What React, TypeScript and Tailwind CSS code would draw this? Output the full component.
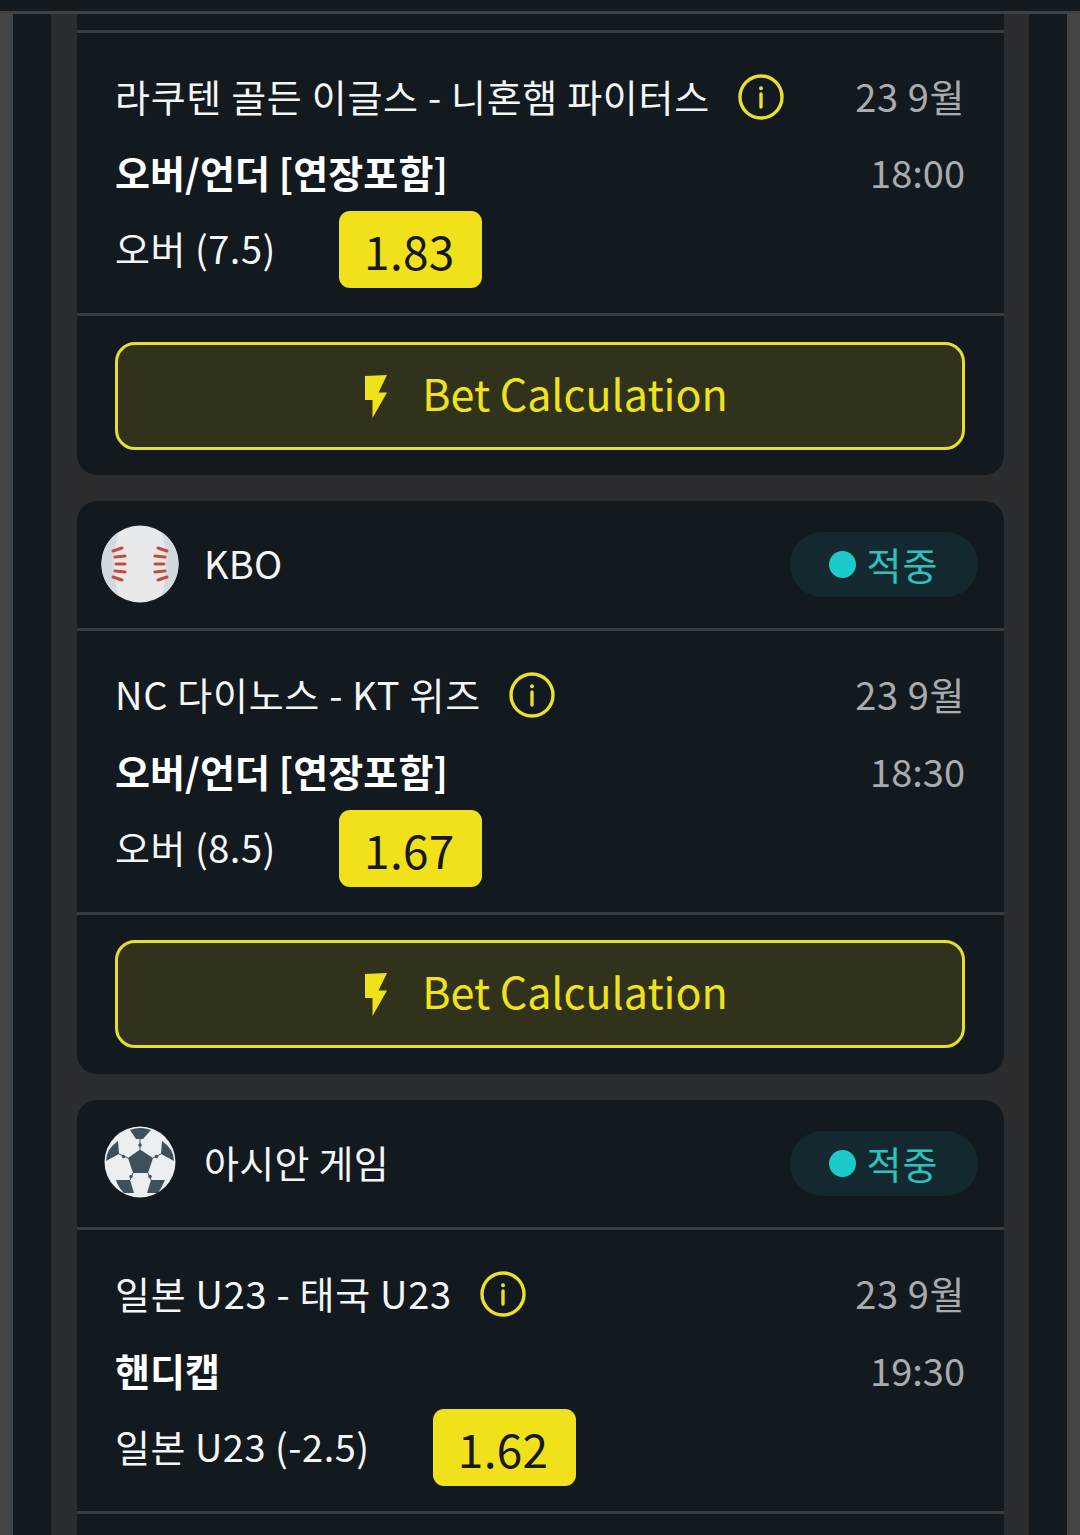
const font = { fontFamily: '"Noto Sans CJK KR", "Noto Sans", sans-serif' };

function Info() {
  return (
    <svg width="46" height="46" viewBox="0 0 46 46" fill="none" className="ml-[28px] shrink-0">
      <circle cx="23" cy="23" r="21" stroke="#e9df2c" strokeWidth="3.4" />
      <path d="M23 20V33" stroke="#e9df2c" strokeWidth="3.4" strokeLinecap="round" />
      <circle cx="23" cy="14.2" r="2" fill="#e9df2c" />
    </svg>
  );
}

function Bolt() {
  return (
    <svg width="22" height="43" viewBox="0 0 22 43">
      <path d="M0 1L22 0L13.5 17.5H22L7.5 43V25H0Z" fill="#f1e11b" />
    </svg>
  );
}

function Baseball() {
  return (
    <svg width="78" height="78" viewBox="-39 -39 78 78" className="-mt-[1px]">
      <circle r="38.5" fill="#e7e9ea" />
      <path d="M-22 -31.7A38.5 38.5 0 0 0 -22 31.7Q-30 0 -22 -31.7Z" fill="#d2dae0" />
      <path d="M22 -31.7A38.5 38.5 0 0 1 22 31.7Q30 0 22 -31.7Z" fill="#d2dae0" />
      <g stroke="#c9493c" strokeWidth="3" strokeLinecap="round">
        <path d="M-27 -13L-18 -16M-25 -7L-15 -8M-24 0L-15 0M-25 7L-15 8M-27 13L-18 16" />
        <path d="M27 -13L18 -16M25 -7L15 -8M24 0L15 0M25 7L15 8M27 13L18 16" />
      </g>
    </svg>
  );
}

function Soccer() {
  return (
    <svg width="72" height="72" viewBox="-36 -36 72 72" className="mb-[3px]">
      <circle r="35.5" fill="#eceff1" />
      <g fill="#40505b">
        <path d="M0 -12.5L13 -4L8 11H-7L-12 -4Z" />
        <path d="M-10 -32Q0 -36 11 -32L3 -23H-4Z" />
        <path d="M-22 -21L-21 -8L-34 -1Q-34 -13 -22 -21Z" />
        <path d="M22 -21L21 -8L34 -1Q34 -13 22 -21Z" />
        <path d="M-24 18H-10L-6 31H-16Q-22 25 -24 18Z" />
        <path d="M11 18H25Q22 25 18 31H7Z" />
      </g>
      <g stroke="#40505b" strokeWidth="1" fill="none">
        <path d="M0 -23V-12.5M-12 -4L-21 -8M13 -4L21 -8M-7 11L-10 18M8 11L11 18" />
      </g>
      <g fill="#40505b">
        <circle cx="0" cy="-17" r="1.7" />
        <circle cx="-16.5" cy="-5.5" r="1.7" />
        <circle cx="16.5" cy="-5.5" r="1.7" />
        <circle cx="-9" cy="14.5" r="1.7" />
        <circle cx="10" cy="14.5" r="1.7" />
      </g>
    </svg>
  );
}

function Line() {
  return <div className="h-[3px] bg-[#3a3d40]" />;
}

function Match({ title, market, label, odds, time, tall }: { title: string; market: string; label: string; odds: string; time: string; tall?: boolean }) {
  return (
    <div className="pt-[32px] pb-[25px] pl-[38px] pr-[39px]">
      <div className="flex h-[64px] items-center justify-between">
        <div className="flex items-center">
          <span className="pb-[2px] text-[38px] tracking-[0.7px] text-[#f4f5f5] leading-none">{title}</span>
          <Info />
        </div>
        <span className="pb-[2px] text-[38px] tracking-[0.6px] text-[#a9acae] leading-none">23 9월</span>
      </div>
      <div className={tall ? "mt-[13px] flex h-[64px] items-center justify-between" : "mt-[12px] flex h-[64px] items-center justify-between"}>
        <span className="-mt-[3px] text-[38px] tracking-[0.1px] font-bold text-white leading-none">{market}</span>
        <span className="pb-[2px] text-[38px] text-[#a9acae] leading-none">{time}</span>
      </div>
      <div className="mt-[6px] flex items-center">
        <span className="pb-[4px] text-[38px] tracking-[0.5px] text-[#f4f5f5] leading-none">{label}</span>
        <div className="ml-[63px] flex h-[77px] w-[143px] items-center justify-center rounded-[11px] bg-[#f1e11b] pt-[1px] pr-[2px] text-[46px] tracking-[0.3px] text-[#15191d] leading-none">
          {odds}
        </div>
      </div>
    </div>
  );
}

function Calc({ tall }: { tall?: boolean }) {
  return (
    <div className={tall ? "pl-[38px] pr-[39px] pt-[25px] pb-[26px]" : "pl-[38px] pr-[39px] pt-[26px] pb-[25px]"}>
      <div className="flex h-[108px] items-center justify-center gap-[35px] rounded-[20px] border-[3px] border-[#e6dd2d] bg-[#31321c] pl-[13px]">
        <Bolt />
        <span className="pb-[8px] text-[43px] leading-none text-[#f0e31c]">Bet Calculation</span>
      </div>
    </div>
  );
}

function Header({ name, icon }: { name: string; icon: any }) {
  return (
    <div className="flex h-[127px] items-center justify-between pl-[24px] pr-[26px]">
      <div className="flex items-center">
        <div className="flex w-[78px] justify-center">{icon}</div>
        <span className="ml-[25px] pb-[4px] text-[38px] tracking-[0.3px] leading-none text-[#f4f5f5]">{name}</span>
      </div>
      <div className="flex h-[65px] w-[188px] items-center justify-center gap-[11px] rounded-full bg-[#14292f] pr-[1px]">
        <div className="h-[27px] w-[27px] rounded-full bg-[#1ccbc9]" />
        <span className="pb-[2px] text-[38px] tracking-[1px] leading-none text-[#2fc0bd]">적중</span>
      </div>
    </div>
  );
}

export default function App() {
  return (
    <div style={font} className="flex h-[1535px] w-[1080px] flex-col overflow-hidden bg-[#131a1f]">
      <div className="h-[11px] shrink-0 bg-[#131a1f]" />
      <div className="h-[3px] shrink-0 bg-[#3f4245]" />
      <div className="flex flex-1 overflow-hidden bg-[#444444] px-[13px]">
        <div className="flex flex-1 bg-[#131a1f] px-[38px]">
          <div className="flex flex-1 flex-col gap-[26px] bg-[#2a2d30] pl-[26px] pr-[25px]">
            <div className="shrink-0 rounded-b-[20px] bg-[#131a1f]">
              <div className="h-[16px]" />
              <Line />
              <Match title="라쿠텐 골든 이글스 - 니혼햄 파이터스" market="오버/언더 [연장포함]" label="오버 (7.5)" odds="1.83" time="18:00" />
              <Line />
              <Calc />
            </div>
            <div className="shrink-0 rounded-[20px] bg-[#131a1f]">
              <Header name="KBO" icon={<Baseball />} />
              <Line />
              <Match tall title="NC 다이노스 - KT 위즈" market="오버/언더 [연장포함]" label="오버 (8.5)" odds="1.67" time="18:30" />
              <Line />
              <Calc tall />
            </div>
            <div className="shrink-0 rounded-t-[20px] bg-[#131a1f]">
              <Header name="아시안 게임" icon={<Soccer />} />
              <Line />
              <Match tall title="일본 U23 - 태국 U23" market="핸디캡" label="일본 U23 (-2.5)" odds="1.62" time="19:30" />
              <Line />
              <div className="h-[40px]" />
            </div>
          </div>
        </div>
      </div>
    </div>
  );
}
